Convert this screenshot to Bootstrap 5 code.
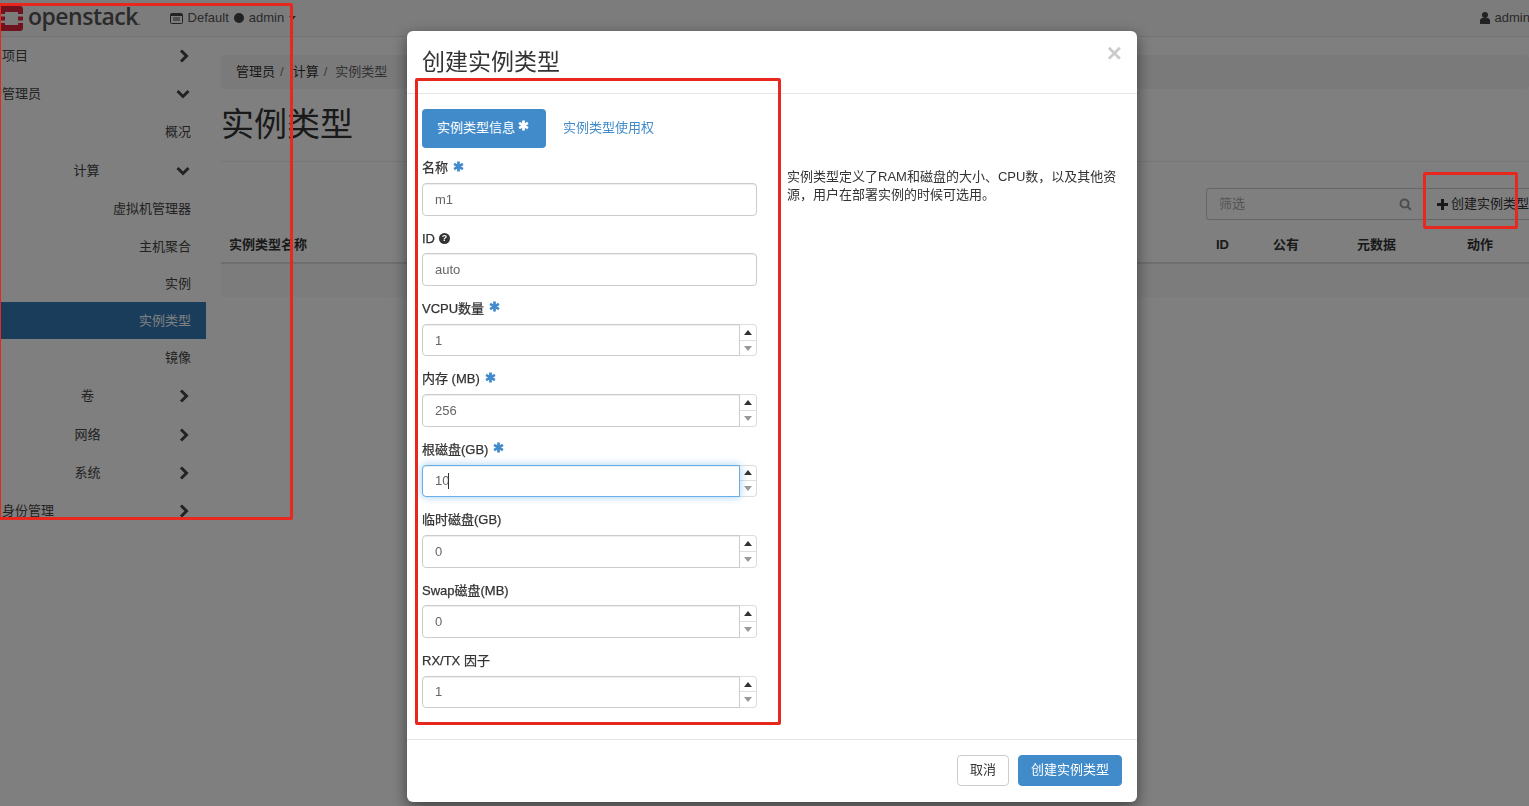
<!DOCTYPE html>
<html lang="zh-CN">

<head>
    <meta charset="UTF-8">
    <title>实例类型</title>
    <link href="https://cdn.jsdelivr.net/npm/bootstrap@5.3.3/dist/css/bootstrap.min.css" rel="stylesheet">
    <style>
        html, body { height: 100%; overflow: hidden; }
        body { font-family: "Liberation Sans", "Noto Sans CJK SC", sans-serif; font-size: 13px; color: #333; background: #fff; }
        .top-bar { height: 37px; background: #f8f8f8; border-bottom: 1px solid #e7e7e7; white-space: nowrap; color: #555; }
        .logo-text { font-family: "Open Sans", sans-serif; font-size: 23px; font-weight: 600; letter-spacing: -.5px; line-height: 1; color: #555; margin: -3px 29px 0 5px; }
        .logo-text small { font-size: 10px; font-weight: 400; letter-spacing: 0; }
        .top-item { margin-left: 5px; }
        .top-right { margin-right: -1px; }
        .page-wrap { width: 1529px; overflow: hidden; }
        .side-menu { width: 206px; flex: none; color: #444; }
        .side-row { padding-right: 15px; display: flex; align-items: center; }
        .side-row.first { padding-left: 2px; padding-right: 16px; justify-content: space-between; }
        .side-row.second { padding-right: 16px; }
        .side-row.second span { flex-grow: 1; text-align: center; padding-right: 3px; }
        .side-row.third { justify-content: flex-end; }
        .side-row.picked { background: #337ab7; color: #fff; }
        .h37 { height: 37px; }
        .h38 { height: 38px; }
        .h39 { height: 39px; }
        .main-area { flex: 1; padding: 18px 0 0 15px; min-width: 0; }
        .crumbs { background: #f5f5f5; height: 34px; border-radius: 4px; padding: 0 15px; display: flex; align-items: center; gap: 5px; margin: 0; }
        .crumbs .sep { color: #777; }
        .crumbs .now { color: #666; margin-left: 3px; }
        .page-title { font-size: 33px; line-height: 40px; margin: 16px 0 0; padding-bottom: 16px; border-bottom: 1px solid #eee; font-weight: 400; color: #333; }
        .table-tools { margin: 26px -14px 0 0; height: 32px; }
        .filter-box { width: 217px; height: 32px; border: 1px solid #ccc; border-right: 0; border-radius: 4px 0 0 4px; padding: 0 11px 0 12px; background: #fff; color: #aaa; }
        .add-btn { height: 32px; padding: 0 13px; border: 1px solid #ccc; border-radius: 0 4px 4px 0; background: #fff; color: #333; font-size: 13px; gap: 3px; white-space: nowrap; }
        .flavor-table { table-layout: fixed; width: 1308px; margin: 7px 0 0; color: #333; }
        .flavor-table th { height: 36px; padding: 0 8px; font-weight: 600; border-bottom: 2px solid #ddd; vertical-align: middle; }
        .flavor-table td { height: 34px; padding: 0; background: #f9f9f9; border-bottom: 0; }
        .flavor-dialog { max-width: 730px; width: 730px; margin: 31px 0 0 407px; }
        .flavor-dialog .modal-content { border: 0; border-radius: 6px; box-shadow: 0 5px 15px rgba(0, 0, 0, .5); }
        .flavor-dialog .modal-header { height: 63px; padding: 0 15px; border-bottom: 1px solid #e5e5e5; align-items: center; }
        .flavor-dialog .modal-title { font-size: 23px; font-weight: 400; line-height: 1; color: #333; margin-top: 0; }
        .close-x { font-family: "Liberation Sans", sans-serif; font-size: 26px; font-weight: 700; line-height: 1; color: #000; opacity: .2; border: 0; background: none; padding: 0; margin: -19px 0 0 auto; }
        .flavor-dialog .modal-body { padding: 15px 15px 30.4px; }
        .form-col { width: 335px; flex: none; }
        .help-col { width: 335px; margin: 59px 0 0 30px; line-height: 18px; flex: none; }
        .tab-on { height: 39px; padding: 0 17px 2px 15px; background: #428bca; color: #fff; border-radius: 4px; }
        .tab-on svg { margin: -5px 0 0 -1px; }
        .tab-off { height: 39px; padding: 0 17px 2px; color: #428bca; text-decoration: none; }
        .tabs-row { margin-bottom: 10px; }
        .field { margin-bottom: 12.7px; }
        .field label { display: flex; align-items: center; gap: 5px; height: 20px; margin-bottom: 5px; color: #333; -webkit-text-stroke: .25px #333; }
        .field .form-control { height: 32.7px; padding: 0 12px; font-size: 13px; color: #666; border-color: #ccc; border-radius: 4px; box-shadow: inset 0 1px 1px rgba(0, 0, 0, .075); }
        .field .input-group .form-control { border-radius: 4px 0 0 4px; }
        .field .form-control.focused { border-color: #66afe9; box-shadow: inset 0 1px 1px rgba(0, 0, 0, .075), 0 0 8px rgba(102, 175, 233, .6); position: relative; z-index: 3; }
        .spin { width: 18px; flex: none; display: flex; flex-direction: column; border: 1px solid #ddd; border-left: 0; border-radius: 0 4px 4px 0; margin-left: 0; background: #fff; }
        .spin span { flex: 1; display: flex; align-items: center; justify-content: center; }
        .spin span + span { border-top: 1px solid #ddd; }
        .tri-up { width: 0; height: 0; border: 4px solid transparent; border-top: 0; border-bottom: 5px solid #333; }
        .tri-down { width: 0; height: 0; border: 4px solid transparent; border-bottom: 0; border-top: 5px solid #999; }
        .type-caret { position: absolute; left: 27px; top: 8px; width: 1px; height: 16px; background: #333; z-index: 4; }
        .star { color: #428bca; margin-top: -4px; }
        .help-dot { width: 11px; height: 11px; border-radius: 50%; background: #333; color: #fff; font-size: 9px; font-weight: 700; line-height: 11px; text-align: center; margin-left: -1px; -webkit-text-stroke: 0; }
        .flavor-dialog .modal-footer { height: 63px; padding: 0 15px; border-top: 1px solid #e5e5e5; gap: 9px; }
        .flavor-dialog .modal-footer > * { margin: 0; }
        .foot-btn { height: 31px; padding: 0 12px 2px; font-size: 13px; line-height: 1; border-radius: 4px; }
        .foot-btn.plain { background: #fff; border: 1px solid #ccc; color: #333; }
        .foot-btn.go { background: #428bca; border: 1px solid #428bca; color: #fff; }
        .note-box { position: fixed; border: 3px solid #e8281e; border-radius: 2px; z-index: 1060; pointer-events: none; }
        .note-side { left: -2px; top: 3px; width: 295px; height: 517px; }
        .note-form { left: 415px; top: 78px; width: 366px; height: 647px; }
        .note-add { left: 1423px; top: 172px; width: 95px; height: 57px; }
    </style>
</head>

<body>
    <svg class="d-none">
        <symbol id="i-right" viewBox="0 0 12 14"><polyline points="3,1.5 8.5,7 3,12.5" fill="none" stroke="currentColor" stroke-width="3"/></symbol>
        <symbol id="i-down" viewBox="0 0 14 12"><polyline points="1.5,3 7,8.5 12.5,3" fill="none" stroke="currentColor" stroke-width="3"/></symbol>
        <symbol id="i-star" viewBox="0 0 12 12"><g stroke="currentColor" stroke-width="3"><line x1="6" y1="0.5" x2="6" y2="11.5"/><line x1="1.2" y1="3.2" x2="10.8" y2="8.8"/><line x1="1.2" y1="8.8" x2="10.8" y2="3.2"/></g></symbol>
    </svg>

    <div class="page-wrap">
        <div class="top-bar d-flex align-items-center">
            <svg width="23" height="25" viewBox="0 0 23 25">
                <path fill="#e0263c" d="M0 0h20a3 3 0 0 1 3 3v5h-5V6H0zM0 19h18v-2h5v5a3 3 0 0 1-3 3H0zM0 10.5h5v4H0zM18 10.5h5v4h-5z"/>
                <path fill="#e0263c" d="M0 6h5v2H0zM0 17h5v2H0z"/>
            </svg>
            <span class="logo-text">openstack<small>.</small></span>
            <svg width="13" height="11" viewBox="0 0 13 11"><rect x=".5" y=".5" width="12" height="10" rx="1" fill="none" stroke="#444"/><rect x="1" y="1" width="11" height="2" fill="#444"/><path d="M3 5h7M3 7h7" stroke="#444"/></svg>
            <span class="top-item">Default</span>
            <svg width="10" height="10" viewBox="0 0 10 10" class="top-item"><circle cx="5" cy="5" r="5" fill="#444"/></svg>
            <span class="top-item">admin</span>
            <svg width="7" height="4" viewBox="0 0 7 4" class="top-item"><path d="M0 0h7L3.5 4z" fill="#555"/></svg>
            <div class="top-right ms-auto d-flex align-items-center">
                <svg width="10" height="12" viewBox="0 0 10 12"><circle cx="5" cy="3" r="3" fill="#444"/><path d="M0 12V8a3 3 0 0 1 3-2h4a3 3 0 0 1 3 2v4z" fill="#444"/></svg>
                <span class="top-item">admin</span>
            </div>
        </div>

        <div class="d-flex">
            <div class="side-menu">
                <div class="side-row first h37"><span>项目</span><svg width="12" height="14"><use href="#i-right"/></svg></div>
                <div class="side-row first h39"><span>管理员</span><svg width="14" height="12"><use href="#i-down"/></svg></div>
                <div class="side-row third h38">概况</div>
                <div class="side-row second h39"><span>计算</span><svg width="14" height="12"><use href="#i-down"/></svg></div>
                <div class="side-row third h38">虚拟机管理器</div>
                <div class="side-row third h37">主机聚合</div>
                <div class="side-row third h37">实例</div>
                <div class="side-row third picked h37">实例类型</div>
                <div class="side-row third h37">镜像</div>
                <div class="side-row second h39"><span>卷</span><svg width="12" height="14"><use href="#i-right"/></svg></div>
                <div class="side-row second h39"><span>网络</span><svg width="12" height="14"><use href="#i-right"/></svg></div>
                <div class="side-row second h38"><span>系统</span><svg width="12" height="14"><use href="#i-right"/></svg></div>
                <div class="side-row first h38"><span>身份管理</span><svg width="12" height="14"><use href="#i-right"/></svg></div>
            </div>

            <div class="main-area">
                <div class="crumbs"><span>管理员</span><span class="sep">/</span><span class="ms-1">计算</span><span class="sep">/</span><span class="now">实例类型</span></div>
                <h1 class="page-title">实例类型</h1>

                <div class="table-tools d-flex justify-content-end">
                    <div class="filter-box d-flex align-items-center justify-content-between">
                        <span>筛选</span>
                        <svg width="13" height="13" viewBox="0 0 13 13"><circle cx="5.5" cy="5.5" r="4" fill="none" stroke="#999" stroke-width="2"/><line x1="8.5" y1="8.5" x2="12" y2="12" stroke="#999" stroke-width="2"/></svg>
                    </div>
                    <button class="add-btn d-flex align-items-center" type="button">
                        <svg width="11" height="11" viewBox="0 0 11 11"><path d="M4 0h3v4h4v3H7v4H4V7H0V4h4z" fill="#333"/></svg>
                        创建实例类型
                    </button>
                </div>

                <table class="table flavor-table">
                    <colgroup>
                        <col style="width: 987px"><col style="width: 57px"><col style="width: 84px"><col style="width: 110px"><col>
                    </colgroup>
                    <thead>
                        <tr><th>实例类型名称</th><th>ID</th><th>公有</th><th>元数据</th><th>动作</th></tr>
                    </thead>
                    <tbody>
                        <tr><td colspan="5"></td></tr>
                    </tbody>
                </table>
            </div>
        </div>
    </div>

    <div class="modal-backdrop fade show"></div>

    <div class="modal d-block">
        <div class="modal-dialog flavor-dialog">
            <div class="modal-content">
                <div class="modal-header">
                    <h4 class="modal-title">创建实例类型</h4>
                    <button class="close-x" type="button">×</button>
                </div>
                <div class="modal-body d-flex">
                    <div class="form-col">
                        <div class="tabs-row d-flex">
                            <div class="tab-on d-flex align-items-center gap-1">实例类型信息 <svg class="text-white" width="11" height="11"><use href="#i-star"/></svg></div>
                            <a class="tab-off d-flex align-items-center" href="#">实例类型使用权</a>
                        </div>

                        <div class="field">
                            <label>名称 <svg class="star" width="11" height="11"><use href="#i-star"/></svg></label>
                            <input class="form-control" type="text" value="m1">
                        </div>
                        <div class="field">
                            <label>ID <span class="help-dot">?</span></label>
                            <input class="form-control" type="text" value="auto">
                        </div>
                        <div class="field">
                            <label>VCPU数量 <svg class="star" width="11" height="11"><use href="#i-star"/></svg></label>
                            <div class="input-group flex-nowrap"><input class="form-control" type="text" value="1"><div class="spin"><span><i class="tri-up"></i></span><span><i class="tri-down"></i></span></div></div>
                        </div>
                        <div class="field">
                            <label>内存 (MB) <svg class="star" width="11" height="11"><use href="#i-star"/></svg></label>
                            <div class="input-group flex-nowrap"><input class="form-control" type="text" value="256"><div class="spin"><span><i class="tri-up"></i></span><span><i class="tri-down"></i></span></div></div>
                        </div>
                        <div class="field">
                            <label>根磁盘(GB) <svg class="star" width="11" height="11"><use href="#i-star"/></svg></label>
                            <div class="input-group flex-nowrap"><input class="form-control focused" type="text" value="10"><b class="type-caret"></b><div class="spin"><span><i class="tri-up"></i></span><span><i class="tri-down"></i></span></div></div>
                        </div>
                        <div class="field">
                            <label>临时磁盘(GB)</label>
                            <div class="input-group flex-nowrap"><input class="form-control" type="text" value="0"><div class="spin"><span><i class="tri-up"></i></span><span><i class="tri-down"></i></span></div></div>
                        </div>
                        <div class="field">
                            <label>Swap磁盘(MB)</label>
                            <div class="input-group flex-nowrap"><input class="form-control" type="text" value="0"><div class="spin"><span><i class="tri-up"></i></span><span><i class="tri-down"></i></span></div></div>
                        </div>
                        <div class="field mb-0">
                            <label>RX/TX 因子</label>
                            <div class="input-group flex-nowrap"><input class="form-control" type="text" value="1"><div class="spin"><span><i class="tri-up"></i></span><span><i class="tri-down"></i></span></div></div>
                        </div>
                    </div>
                    <div class="help-col">实例类型定义了RAM和磁盘的大小、CPU数，以及其他资源，用户在部署实例的时候可选用。</div>
                </div>
                <div class="modal-footer">
                    <button class="foot-btn plain" type="button">取消</button>
                    <button class="foot-btn go" type="button">创建实例类型</button>
                </div>
            </div>
        </div>
    </div>

    <div class="note-box note-side"></div>
    <div class="note-box note-form"></div>
    <div class="note-box note-add"></div>

    <script src="https://cdn.jsdelivr.net/npm/bootstrap@5.3.3/dist/js/bootstrap.bundle.min.js"></script>
</body>

</html>
